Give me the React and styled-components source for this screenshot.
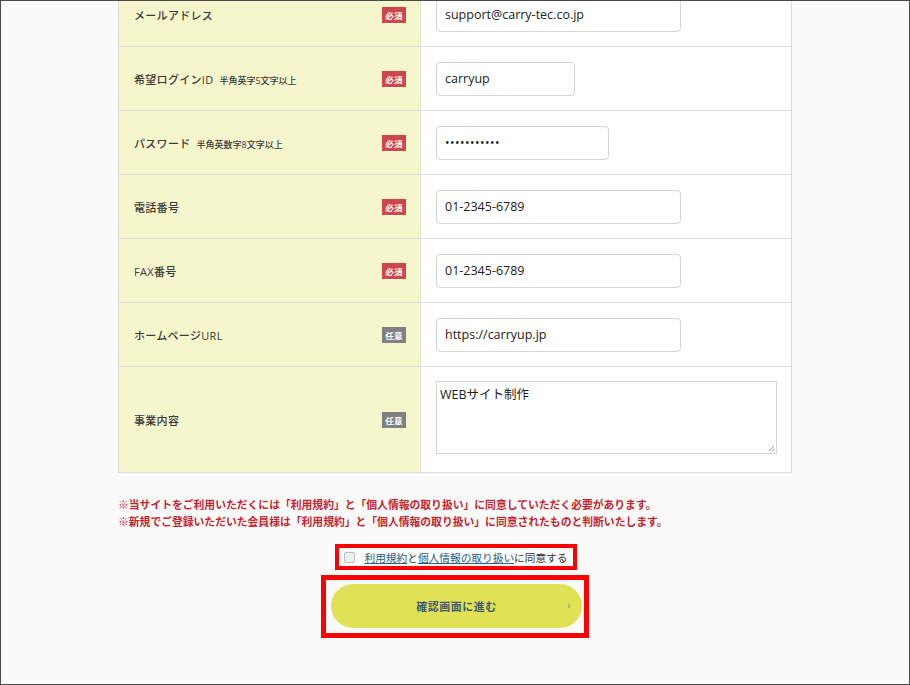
import React from "react";
import styled, { createGlobalStyle } from "styled-components";

const GlobalStyle = createGlobalStyle`
  * { box-sizing: border-box; }
  html, body { margin: 0; padding: 0; background: #fafafa; }
  body {
    font-family: "Open Sans", "Noto Sans CJK JP", sans-serif;
    color: #333;
  }
`;

const Frame = styled.div`
  width: 910px;
  height: 685px;
  border: 1px solid #4a4a4a;
  background: #fafafa;
  overflow: hidden;
`;

const Form = styled.div`
  width: 674px;
  margin: -19px auto 0;
`;

const Table = styled.div`
  border: 1px solid #dcdcdc;
  border-top: none;
  background: #fff;
`;

const Row = styled.div`
  display: grid;
  grid-template-columns: 302px 1fr;
  border-top: 1px solid #dcdcdc;
  min-height: ${(p) => (p.$tall ? "106px" : "64px")};
`;

const Label = styled.div`
  display: flex;
  align-items: center;
  justify-content: space-between;
  padding: 0 14px 0 15px;
  background: #f6f6cc;
  border-right: 1px solid #e6e6c4;
  font-size: 11px;
  font-weight: 500;
  color: #3a3a3a;
  letter-spacing: 0.3px;
`;

const Sub = styled.span`
  font-size: 9px;
  margin-left: 6px;
  letter-spacing: 0;
`;

const Badge = styled.span`
  display: inline-flex;
  align-items: center;
  justify-content: center;
  width: 24px;
  height: 16px;
  font-size: 8.5px;
  font-weight: 700;
  color: #fff;
  background: ${(p) => (p.$optional ? "#818181" : "#d0454c")};
`;

const Field = styled.div`
  display: flex;
  align-items: ${(p) => (p.$top ? "flex-start" : "center")};
  padding: ${(p) => (p.$top ? "14px 14px 0 15px" : "0 14px 0 15px")};
`;

const Input = styled.div`
  width: ${(p) => p.$w}px;
  height: 34px;
  display: flex;
  align-items: center;
  padding: 0 8px;
  border: 1px solid #d4d4d4;
  border-radius: 4px;
  background: #fff;
  font-size: 12.5px;
  color: #222;
`;

const Dots = styled.span`
  font-size: 12px;
  letter-spacing: 0.5px;
`;

const TextArea = styled.div`
  position: relative;
  width: 341px;
  height: 73px;
  padding: 2px 3px;
  border: 1px solid #d4d4d4;
  background: #fff;
  font-size: 12.5px;
  color: #222;
`;

const Grip = styled.svg`
  position: absolute;
  right: 1px;
  bottom: 1px;
`;

const Notes = styled.div`
  margin-top: 23px;
  font-size: 10.8px;
  font-weight: 700;
  line-height: 17px;
  color: #c8242b;
`;

const Center = styled.div`
  display: flex;
  flex-direction: column;
  align-items: center;
`;

const AgreeBox = styled.label`
  margin-top: 14px;
  display: flex;
  align-items: center;
  height: 26px;
  padding: 0 5px 0 5px;
  border: 4px solid #f00;
  font-size: 10.7px;
  color: #333;
  margin-left: 2px;
`;

const Check = styled.span`
  width: 11px;
  height: 11px;
  margin-right: 9px;
  border: 1px solid #bdbdbd;
  border-radius: 2px;
  background: #efefef;
`;

const Link = styled.a`
  color: #2b5f86;
  text-decoration: underline;
`;

const ButtonBox = styled.div`
  margin-top: 5px;
  padding: 4px 2px 5px 5px;
  border: 5px solid #f00;
`;

const Button = styled.button`
  position: relative;
  width: 251px;
  height: 44px;
  border: none;
  border-radius: 22px;
  background: #e0e255;
  font-family: inherit;
  font-size: 11px;
  font-weight: 700;
  color: #3b5872;
  letter-spacing: 0.5px;
  cursor: pointer;
`;

const Arrow = styled.span`
  position: absolute;
  right: 11px;
  top: 13px;
  font-size: 11px;
  font-weight: 400;
  color: #8a8f7a;
`;

const rows = [
  { label: "メールアドレス", value: "support@carry-tec.co.jp", w: 245 },
  { label: "希望ログインID", sub: "半角英字5文字以上", value: "carryup", w: 139 },
  { label: "パスワード", sub: "半角英数字8文字以上", value: "•••••••••••", w: 173, pw: true },
  { label: "電話番号", value: "01-2345-6789", w: 245 },
  { label: "FAX番号", value: "01-2345-6789", w: 245 },
  { label: "ホームページURL", value: "https://carryup.jp", w: 245, optional: true },
];

export default function App() {
  return (
    <>
      <GlobalStyle />
      <Frame>
        <Form>
          <Table>
            {rows.map((r) => (
              <Row key={r.label}>
                <Label>
                  <span>
                    {r.label}
                    {r.sub && <Sub>{r.sub}</Sub>}
                  </span>
                  <Badge $optional={r.optional}>{r.optional ? "任意" : "必須"}</Badge>
                </Label>
                <Field>
                  <Input $w={r.w}>{r.pw ? <Dots>{r.value}</Dots> : r.value}</Input>
                </Field>
              </Row>
            ))}
            <Row $tall>
              <Label>
                <span>事業内容</span>
                <Badge $optional>任意</Badge>
              </Label>
              <Field $top>
                <TextArea>
                  WEBサイト制作
                  <Grip width="8" height="8" viewBox="0 0 8 8">
                    <path d="M7 2 L2 7 M7 5 L5 7" stroke="#999" strokeWidth="1" />
                  </Grip>
                </TextArea>
              </Field>
            </Row>
          </Table>
          <Notes>
            <div>※当サイトをご利用いただくには「利用規約」と「個人情報の取り扱い」に同意していただく必要があります。</div>
            <div>※新規でご登録いただいた会員様は「利用規約」と「個人情報の取り扱い」に同意されたものと判断いたします。</div>
          </Notes>
          <Center>
            <AgreeBox>
              <Check />
              <Link href="#">利用規約</Link>と<Link href="#">個人情報の取り扱い</Link>に同意する
            </AgreeBox>
            <ButtonBox>
              <Button>
                確認画面に進む
                <Arrow>›</Arrow>
              </Button>
            </ButtonBox>
          </Center>
        </Form>
      </Frame>
    </>
  );
}
